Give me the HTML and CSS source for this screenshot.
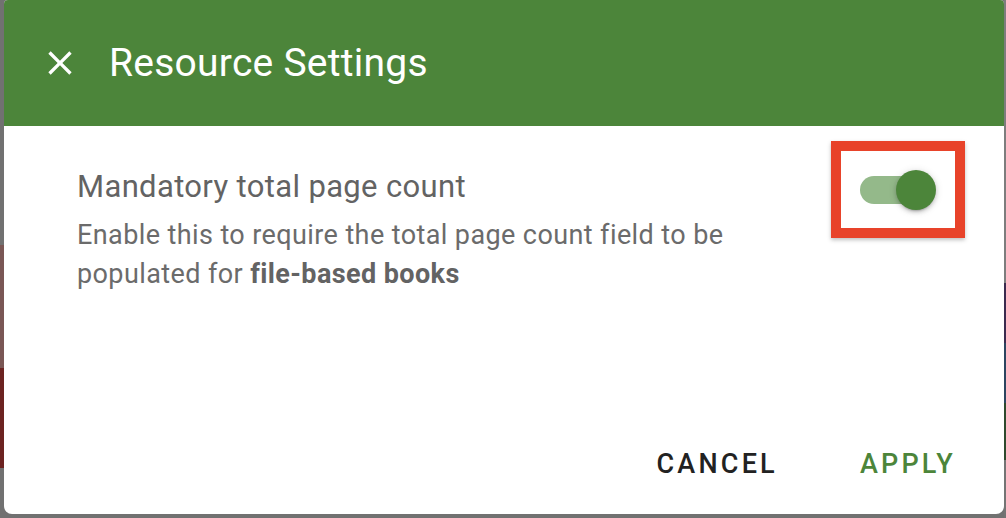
FILE: index.html
```html
<!DOCTYPE html>
<html lang="en">
<head>
<meta charset="utf-8">
<title>Resource Settings</title>
<link rel="stylesheet" href="styles.css">
</head>
<body>
<div class="backdrop">
  <section class="dialog" role="dialog" aria-labelledby="dlg-title">
    <header class="dialog-bar">
      <button class="close-btn" aria-label="Close">
        <svg viewBox="0 0 24 24" width="40" height="40" aria-hidden="true">
          <path d="M19 6.41 17.59 5 12 10.59 6.41 5 5 6.41 10.59 12 5 17.59 6.41 19 12 13.41 17.59 19 19 17.59 13.41 12z" fill="#fff"/>
        </svg>
      </button>
      <h1 id="dlg-title" class="dialog-title">Resource Settings</h1>
    </header>

    <div class="dialog-body">
      <div class="setting">
        <div class="setting-text">
          <div class="setting-label">Mandatory total page count</div>
          <div class="setting-help">Enable this to require the total page count field to be populated for <strong>file-based books</strong></div>
        </div>
        <div class="highlight">
          <span class="switch" role="switch" aria-checked="true">
            <span class="switch-track"></span>
            <span class="switch-thumb"></span>
          </span>
        </div>
      </div>
    </div>

    <footer class="dialog-actions">
      <button class="text-btn">CANCEL</button>
      <button class="text-btn primary">APPLY</button>
    </footer>
  </section>
</div>
</body>
</html>
```

FILE: styles.css
```css
html, body {
  margin: 0;
  padding: 0;
}

body {
  width: 1006px;
  height: 518px;
  overflow: hidden;
  font-family: Roboto, "Noto Sans", Arial, sans-serif;
}

/* dimmed page behind the dialog, with the edges of cards peeking out */
.backdrop {
  width: 1006px;
  height: 518px;
  background:
    linear-gradient(to bottom,
      transparent 0 245px,
      #7a5755 245px 368px,
      #6c2321 368px 468px,
      transparent 468px) left top / 4px 100% no-repeat,
    linear-gradient(to bottom,
      #7d7d7d 0 283px,
      #3b2b4f 283px 343px,
      #2c4560 343px 403px,
      #2f4a2d 403px 460px,
      #747474 460px) right top / 2px 100% no-repeat,
    #717171;
  padding: 0 2px 4px 4px;
  box-sizing: border-box;
}

.dialog {
  width: 1000px;
  height: 514px;
  background: #fff;
  border-radius: 4px 4px 8px 8px;
  overflow: hidden;
  display: flex;
  flex-direction: column;
}

.dialog-bar {
  height: 126px;
  flex: none;
  background: #4c853a;
  display: flex;
  align-items: center;
  padding-left: 36px;
  box-sizing: border-box;
}

.close-btn {
  width: 40px;
  height: 40px;
  padding: 0;
  border: 0;
  background: none;
  display: flex;
  align-items: center;
  justify-content: center;
}

.dialog-title {
  margin: 0 0 0 29px;
  font-weight: 400;
  font-size: 39px;
  color: #fff;
  letter-spacing: 0.25px;
}

.dialog-body {
  flex: 1;
  padding: 15px 39px 0 73px;
}

.setting {
  display: flex;
  align-items: flex-start;
  justify-content: space-between;
}

.setting-text {
  width: 680px;
  padding-top: 26px;
}

.setting-label {
  font-size: 31px;
  line-height: 40px;
  letter-spacing: 0.35px;
  color: #636363;
}

.setting-help {
  margin-top: 9px;
  font-size: 27px;
  line-height: 39px;
  letter-spacing: 0.4px;
  color: #6b6b6b;
}

.setting-help strong {
  font-weight: 700;
  color: #636363;
}

/* red annotation frame round the toggle */
.highlight {
  width: 114px;
  height: 77px;
  border: 10px solid #e8432a;
  box-shadow: 0 2px 4px rgba(0, 0, 0, 0.25);
  display: flex;
  align-items: center;
  justify-content: center;
}

.switch {
  position: relative;
  width: 76px;
  height: 40px;
  display: block;
}

.switch-track {
  position: absolute;
  left: 0;
  top: 6px;
  width: 70px;
  height: 28px;
  border-radius: 14px;
  background: #94b98a;
}

.switch-thumb {
  position: absolute;
  right: 0;
  top: 0;
  width: 40px;
  height: 40px;
  border-radius: 50%;
  background: #4c853a;
  box-shadow: 0 3px 2px -2px rgba(0,0,0,.2), 0 2px 4px rgba(0,0,0,.18), 0 1px 8px rgba(0,0,0,.12);
}

.dialog-actions {
  flex: none;
  display: flex;
  justify-content: flex-end;
  align-items: center;
  gap: 82px;
  padding: 0 48px 35px 0;
}

.text-btn {
  border: 0;
  background: none;
  padding: 0;
  font-family: Roboto, "Noto Sans", Arial, sans-serif;
  font-weight: 500;
  font-size: 27px;
  letter-spacing: 3.2px;
  color: #222;
  line-height: 30px;
}

.text-btn.primary {
  color: #4c853a;
}
```
